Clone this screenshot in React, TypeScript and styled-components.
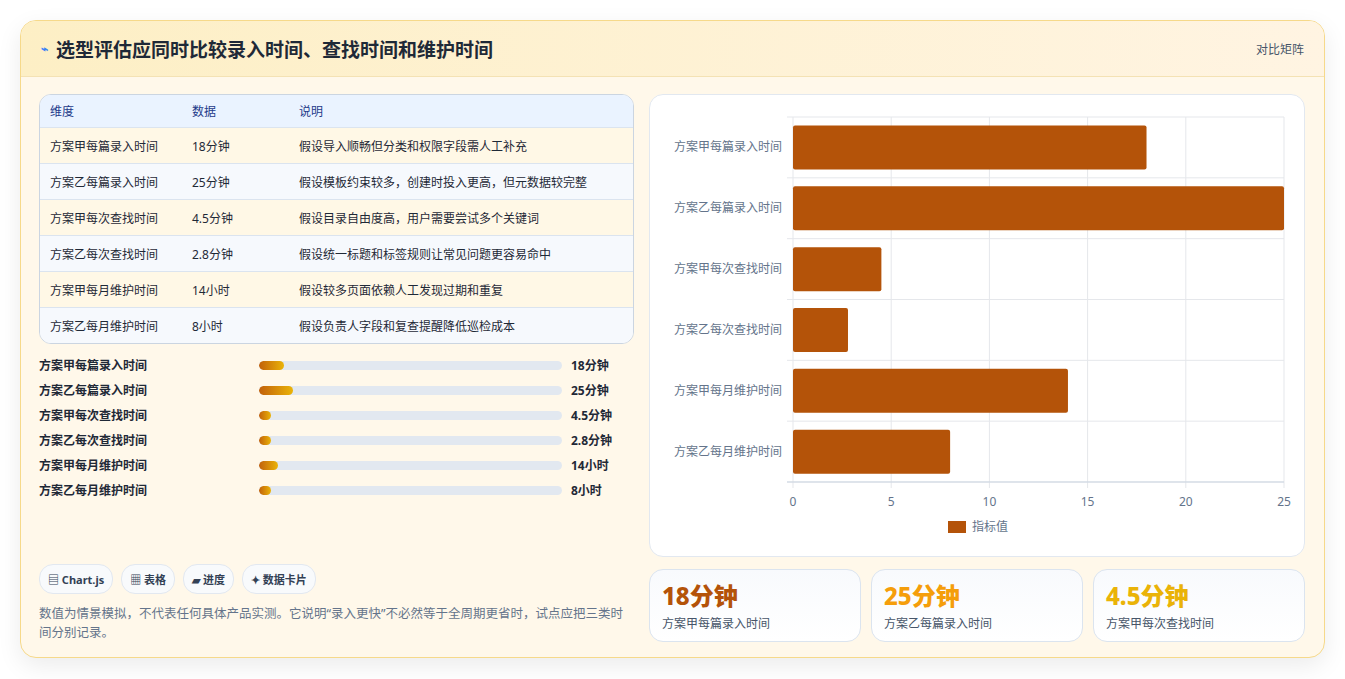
import React from 'react';
import styled, { createGlobalStyle } from 'styled-components';

const GlobalStyle = createGlobalStyle`
  body {
    margin: 0;
    background: #f3f4f6;
    font-family: "Noto Sans", "Noto Sans CJK SC", sans-serif;
  }
`;

const rows = [
  { name: '方案甲每篇录入时间', value: 18, unit: '18分钟', note: '假设导入顺畅但分类和权限字段需人工补充' },
  { name: '方案乙每篇录入时间', value: 25, unit: '25分钟', note: '假设模板约束较多，创建时投入更高，但元数据较完整' },
  { name: '方案甲每次查找时间', value: 4.5, unit: '4.5分钟', note: '假设目录自由度高，用户需要尝试多个关键词' },
  { name: '方案乙每次查找时间', value: 2.8, unit: '2.8分钟', note: '假设统一标题和标签规则让常见问题更容易命中' },
  { name: '方案甲每月维护时间', value: 14, unit: '14小时', note: '假设较多页面依赖人工发现过期和重复' },
  { name: '方案乙每月维护时间', value: 8, unit: '8小时', note: '假设负责人字段和复查提醒降低巡检成本' },
];

const Page = styled.div`
  background: #fff;
  padding: 20px 20px 21px;
  height: 679px;
  box-sizing: border-box;
`;

const Card = styled.div`
  border: 1px solid #f6d98a;
  border-radius: 16px;
  background: #fff8ea;
  box-shadow: 0 8px 24px rgba(0, 0, 0, 0.08);
  overflow: hidden;
  height: 638px;
  box-sizing: border-box;
`;

const Header = styled.div`
  height: 55px;
  display: flex;
  align-items: center;
  justify-content: space-between;
  padding: 0 20px;
  background: linear-gradient(90deg, #fdefc5, #fff4e2);
  border-bottom: 1px solid #f4e2b4;
`;

const Title = styled.h1`
  margin: 0;
  font-size: 19px;
  font-weight: 700;
  color: #1f2937;
  display: flex;
  align-items: center;
  gap: 8px;
`;

const Badge = styled.span`
  font-size: 12px;
  color: #475569;
`;

const Body = styled.div`
  display: grid;
  grid-template-columns: 595px 656px;
  gap: 15px;
  padding: 17px 19px 19px 18px;
  height: 563px;
  box-sizing: border-box;
`;

const Left = styled.div`
  display: flex;
  flex-direction: column;
`;

const Table = styled.div`
  border: 1px solid #cbd5e1;
  border-radius: 12px;
  overflow: hidden;
  background: #fff;
`;

const Row = styled.div<{ $head?: boolean; $alt?: boolean }>`
  display: grid;
  grid-template-columns: 142px 107px 1fr;
  height: ${(p) => (p.$head ? '32px' : '35px')};
  align-items: center;
  padding-left: 10px;
  font-size: 12px;
  color: ${(p) => (p.$head ? '#1e3a8a' : '#1f2937')};
  background: ${(p) => (p.$head ? '#eaf3ff' : p.$alt ? '#f6f9fd' : '#fff8e6')};
  border-top: ${(p) => (p.$head ? 'none' : '1px solid #dbe4ef')};
`;

const Bars = styled.div`
  display: flex;
  flex-direction: column;
  gap: 9px;
  margin-top: 12px;
`;

const BarRow = styled.div`
  display: grid;
  grid-template-columns: 220px 303px 1fr;
  gap: 0 0;
  align-items: center;
  height: 16px;
  font-size: 12px;
  font-weight: 700;
  color: #1f2937;
`;

const Track = styled.div`
  height: 9px;
  border-radius: 5px;
  background: #e2e8f0;
  overflow: hidden;
`;

const Fill = styled.div`
  height: 100%;
  min-width: 12px;
  border-radius: 5px;
  background: linear-gradient(90deg, #c2610a, #eab308);
`;

const BarValue = styled.span`
  padding-left: 9px;
`;

const Chips = styled.div`
  display: flex;
  gap: 8px;
  margin-top: auto;
`;

const Chip = styled.span`
  font-size: 11px;
  font-weight: 700;
  color: #334155;
  border: 1px solid #e2e8f0;
  background: #f8fafc;
  border-radius: 14px;
  padding: 6px 8px;
`;

const Note = styled.p`
  margin: 10px 0 0;
  font-size: 12.5px;
  line-height: 19px;
  color: #64748b;
`;

const Right = styled.div`
  display: flex;
  flex-direction: column;
  gap: 12px;
`;

const ChartCard = styled.div`
  height: 461px;
  border: 1px solid #e2e8f0;
  border-radius: 14px;
  background: #fff;
`;

const Stats = styled.div`
  display: grid;
  grid-template-columns: repeat(3, 1fr);
  gap: 10px;
`;

const Stat = styled.div`
  height: 73px;
  box-sizing: border-box;
  border: 1px solid #dbe4ef;
  border-radius: 14px;
  background: linear-gradient(180deg, #f8fafd, #fff);
  padding: 10px 12px;
`;

const StatValue = styled.div<{ $color: string }>`
  font-size: 24px;
  font-weight: 800;
  line-height: 32px;
  color: ${(p) => p.$color};
`;

const StatLabel = styled.div`
  font-size: 12px;
  color: #475569;
  margin-top: 2px;
`;

const Chart = () => {
  const x0 = 143, w = 491, y0 = 22, h = 365;
  const rh = h / 6;
  return (
    <svg width="656" height="461" style={{ display: 'block' }}>
      {[0, 5, 10, 15, 20, 25].map((t) => {
        const x = x0 + (t / 25) * w;
        return (
          <g key={t}>
            <line x1={x} x2={x} y1={y0} y2={y0 + h + 6} stroke="#e5e7eb" />
            <text x={x} y={y0 + h + 24} fontSize="12" fill="#64748b" textAnchor="middle">{t}</text>
          </g>
        );
      })}
      {Array.from({ length: 7 }).map((_, i) => (
        <line key={i} x1={x0 - 6} x2={x0 + w} y1={y0 + i * rh} y2={y0 + i * rh} stroke="#e5e7eb" />
      ))}
      <line x1={x0 - 6} x2={x0 + w} y1={y0 + h} y2={y0 + h} stroke="#cbd5e1" />
      {rows.map((r, i) => (
        <g key={r.name}>
          <rect x={x0} y={y0 + i * rh + 8.5} width={(r.value / 25) * w} height={44} rx="2" fill="#b45309" />
          <text x={x0 - 11} y={y0 + i * rh + rh / 2 + 4} fontSize="12" fill="#64748b" textAnchor="end">{r.name}</text>
        </g>
      ))}
      <rect x="298" y="426" width="18" height="12" fill="#b45309" />
      <text x="322" y="436" fontSize="12" fill="#64748b">指标值</text>
    </svg>
  );
};

export default function App() {
  return (
    <Page>
      <GlobalStyle />
      <Card>
        <Header>
          <Title><span style={{ fontSize: 12, color: '#3b82f6' }}>⌁</span>选型评估应同时比较录入时间、查找时间和维护时间</Title>
          <Badge>对比矩阵</Badge>
        </Header>
        <Body>
          <Left>
            <Table>
              <Row $head><span>维度</span><span>数据</span><span>说明</span></Row>
              {rows.map((r, i) => (
                <Row key={r.name} $alt={i % 2 === 1}>
                  <span>{r.name}</span><span>{r.unit}</span><span>{r.note}</span>
                </Row>
              ))}
            </Table>
            <Bars>
              {rows.map((r) => (
                <BarRow key={r.name}>
                  <span>{r.name}</span>
                  <Track><Fill style={{ width: `${r.value * 0.45}%` }} /></Track>
                  <BarValue>{r.unit}</BarValue>
                </BarRow>
              ))}
            </Bars>
            <Chips>
              <Chip>▤ Chart.js</Chip>
              <Chip>▦ 表格</Chip>
              <Chip>▰ 进度</Chip>
              <Chip>✦ 数据卡片</Chip>
            </Chips>
            <Note>数值为情景模拟，不代表任何具体产品实测。它说明“录入更快”不必然等于全周期更省时，试点应把三类时间分别记录。</Note>
          </Left>
          <Right>
            <ChartCard><Chart /></ChartCard>
            <Stats>
              <Stat><StatValue $color="#b45309">18分钟</StatValue><StatLabel>方案甲每篇录入时间</StatLabel></Stat>
              <Stat><StatValue $color="#f59e0b">25分钟</StatValue><StatLabel>方案乙每篇录入时间</StatLabel></Stat>
              <Stat><StatValue $color="#eab308">4.5分钟</StatValue><StatLabel>方案甲每次查找时间</StatLabel></Stat>
            </Stats>
          </Right>
        </Body>
      </Card>
    </Page>
  );
}
